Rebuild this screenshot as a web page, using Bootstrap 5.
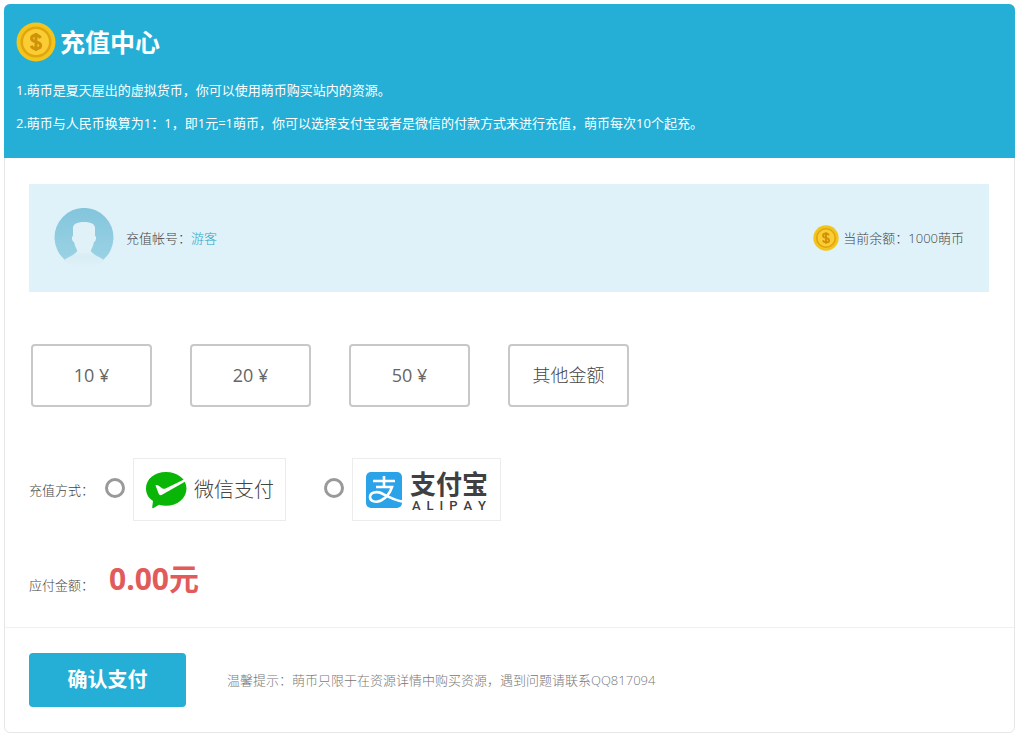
<!DOCTYPE html>
<html lang="zh-CN">
<head>
<meta charset="utf-8">
<meta name="viewport" content="width=device-width, initial-scale=1">
<title>充值中心</title>
<link href="https://cdn.jsdelivr.net/npm/bootstrap@5.3.0/dist/css/bootstrap.min.css" rel="stylesheet">
<style>
  :root { --brand: #25afd6; }
  body { font-family: "Open Sans", "Noto Sans CJK SC", sans-serif; font-size: 13px; line-height: 20px; font-weight: 300; color: #444; background: #fff; }
  .recharge { margin: 4px 9px 4px 4px; border: 1px solid #e6e6e6; border-radius: 6px; }
  .recharge-head { background: var(--brand); color: #fff; margin: -1px -1px 0; padding: 18px 12px; border-radius: 6px 6px 0 0; }
  .recharge-head h1 { font-size: 25px; line-height: 40px; font-weight: 700; }
  .recharge-head p { margin: 0; line-height: 33px; font-weight: 400; }
  .recharge-title { margin-bottom: 12px; }
  .recharge-body { padding: 26px 25px 28px 24px; }
  .account { background: #e0f2f9; padding: 24px 25px; min-height: 108px; }
  .account a { color: #25a5c4; }
  .amounts { margin: 52px 0 51px 2px; column-gap: 38px; }
  .btn-amount { width: 121px; height: 63px; padding: 0; border: 2px solid #c8c8c8; border-radius: 4px; font-size: 18px; color: #666; background: #fff; }
  .btn-custom { font-weight: 300; color: #444; }
  .btn-amount:hover, .btn-amount:focus { border-color: var(--brand); color: var(--brand); }
  .row-label { width: 76px; }
  .pay-options { column-gap: 38px; }
  .pay-radio { appearance: none; width: 20px; height: 20px; margin: 0 8px 4px 0; border: 3px solid #999; border-radius: 50%; background: #fff; }
  .pay-radio:checked { background: radial-gradient(var(--brand) 40%, #fff 45%); }
  .pay-brand { height: 63px; border: 1px solid #ececec; padding: 0 11px; gap: 7px; cursor: pointer; }
  .pay-brand-wide { padding: 0 12px; }
  .wechat-name { font-size: 20px; font-weight: 300; color: #444; }
  .alipay-name { font-size: 26px; line-height: 32px; font-weight: 700; color: #404040; }
  .alipay-latin { font: 500 13px/12px Roboto, sans-serif; color: #404040; padding: 0 2px; }
  .total { margin-top: 38px; }
  .total output { font-size: 30px; line-height: 40px; font-weight: 700; color: #e25b5b; margin-left: 4px; }
  .recharge-foot { border-top: 1px solid #f0f0f0; padding: 25px 24px; column-gap: 41px; }
  .btn-pay { width: 157px; height: 54px; background: var(--brand); color: #fff; font-size: 20px; font-weight: 700; border: 0; border-radius: 4px; }
  .btn-pay:hover { background: #1c9cc0; color: #fff; }
  .tip { color: #777; }
</style>
</head>
<body>
<svg class="d-none" aria-hidden="true">
  <symbol id="coin" viewBox="0 0 40 40">
    <circle cx="20" cy="20" r="19.5" fill="#f2c41c"/>
    <circle cx="20" cy="20" r="15.5" fill="#dfa60d"/>
    <circle cx="20" cy="20" r="13" fill="#fbcc33"/>
    <path d="M24.500 16c-1-2-2.500-2.800-4.500-2.800-2.700 0-4.500 1.300-4.500 3.300 0 4.400 9.200 2.400 9.200 6.800 0 2-1.800 3.400-4.500 3.400-2.500 0-4.200-1-5-3M20 11v18" fill="none" stroke="#cf930b" stroke-width="3"/>
  </symbol>
</svg>

<main class="recharge">
  <header class="recharge-head">
    <div class="recharge-title d-flex align-items-center gap-1">
      <svg width="40" height="40" aria-hidden="true"><use href="#coin"/></svg>
      <h1 class="mb-0">充值中心</h1>
    </div>
    <p>1.萌币是夏天屋出的虚拟货币，你可以使用萌币购买站内的资源。</p>
    <p>2.萌币与人民币换算为1：1，即1元=1萌币，你可以选择支付宝或者是微信的付款方式来进行充值，萌币每次10个起充。</p>
  </header>

  <form>
    <div class="recharge-body">
      <section class="account d-flex flex-wrap align-items-center justify-content-between gap-3">
        <div class="d-flex align-items-center">
          <svg class="me-2" width="60" height="60" viewBox="0 0 60 60" aria-hidden="true">
            <defs>
              <linearGradient id="sky" x2="0" y2="1"><stop offset="0" stop-color="#83c5dc"/><stop offset="1" stop-color="#9bd2e4"/></linearGradient>
              <linearGradient id="shirt" x2="0" y2="1"><stop offset="0" stop-color="#e2f2f8"/><stop offset=".4" stop-color="#d8edf5"/><stop offset="1" stop-color="#e0f2f9"/></linearGradient>
            </defs>
            <path d="M11 52A29.500 29.500 0 1 1 49 52Z" fill="url(#sky)"/>
            <path d="M10 53c3-5 12-5 14-12h12c2 7 11 7 14 12-10 9-30 9-40 0z" fill="url(#shirt)"/>
            <path d="M19 22c-1-6 4-8 11-8s12 2 11 8v6c2 0 1 6-1 6-1 5-3 9-6 11h-8c-3-2-5-6-6-11-2 0-3-6-1-6z" fill="#e0f1f7"/>
          </svg>
          <span class="ms-1">充值帐号：</span><a href="#" class="text-decoration-none">游客</a>
        </div>
        <div class="d-flex align-items-center">
          <svg class="me-1" width="26" height="26" aria-hidden="true"><use href="#coin"/></svg>
          <span>当前余额：1000萌币</span>
        </div>
      </section>

      <div class="amounts d-flex flex-wrap row-gap-3">
        <button type="button" class="btn btn-amount">10 ¥</button>
        <button type="button" class="btn btn-amount">20 ¥</button>
        <button type="button" class="btn btn-amount">50 ¥</button>
        <button type="button" class="btn btn-amount btn-custom">其他金额</button>
      </div>

      <div class="d-flex align-items-center" role="radiogroup" aria-labelledby="pay-label">
        <span class="row-label flex-shrink-0" id="pay-label">充值方式：</span>
        <div class="pay-options d-flex flex-wrap row-gap-3">
          <div class="d-flex align-items-center">
            <input class="pay-radio" type="radio" name="pay" id="wechat">
            <label class="pay-brand d-flex align-items-center" for="wechat">
              <svg width="42" height="38" viewBox="0 0 42 38" aria-hidden="true">
                <path d="M21 1C9.500 1 1 8 1 17.500c0 5.500 2.500 9.500 7 12.500l-.8 6.500c0 .8.8 1 1.400.6L14 33.800c2.300.7 4.700 1 7 1 11.500 0 20.500-7.500 20.500-17.300C41.500 8 32.500 1 21 1z" fill="#09b507"/>
                <path d="M10.500 14.500c1-1 2.500-.4 3.500.5l3.500 2.500c1 .5 2 .4 3 0L38 9c2-.6 3 1.200 1 2.300L17 23.800c-1.500.8-2.700.4-3.300-1z" fill="#fff"/>
              </svg>
              <span class="wechat-name">微信支付</span>
            </label>
          </div>
          <div class="d-flex align-items-center">
            <input class="pay-radio" type="radio" name="pay" id="alipay">
            <label class="pay-brand pay-brand-wide d-flex align-items-center" for="alipay">
              <svg width="38" height="38" viewBox="0 0 38 38" aria-hidden="true">
                <rect x="1" y="1" width="36" height="36" rx="5" fill="#2ba3e8"/>
                <path d="M8 10h22M19 5v11M11 16h16c-2 6-6 11-11 13.500-5 2.500-11 1-11-3.500 0-5 7-6 12-3.500 5 2.500 12 6.500 20 8" fill="none" stroke="#fff" stroke-width="2.600"/>
              </svg>
              <span>
                <span class="alipay-name d-block">支付宝</span>
                <span class="alipay-latin d-flex justify-content-between"><span>A</span><span>L</span><span>I</span><span>P</span><span>A</span><span>Y</span></span>
              </span>
            </label>
          </div>
        </div>
      </div>

      <div class="total d-flex align-items-end">
        <label class="row-label pb-1" for="total">应付金额：</label>
        <output id="total">0.00元</output>
      </div>
    </div>

    <footer class="recharge-foot d-flex flex-wrap align-items-center row-gap-3">
      <button type="submit" class="btn btn-pay">确认支付</button>
      <span class="tip">温馨提示：萌币只限于在资源详情中购买资源，遇到问题请联系QQ817094</span>
    </footer>
  </form>
</main>
<script src="https://cdn.jsdelivr.net/npm/bootstrap@5.3.0/dist/js/bootstrap.bundle.min.js"></script>
</body>
</html>
